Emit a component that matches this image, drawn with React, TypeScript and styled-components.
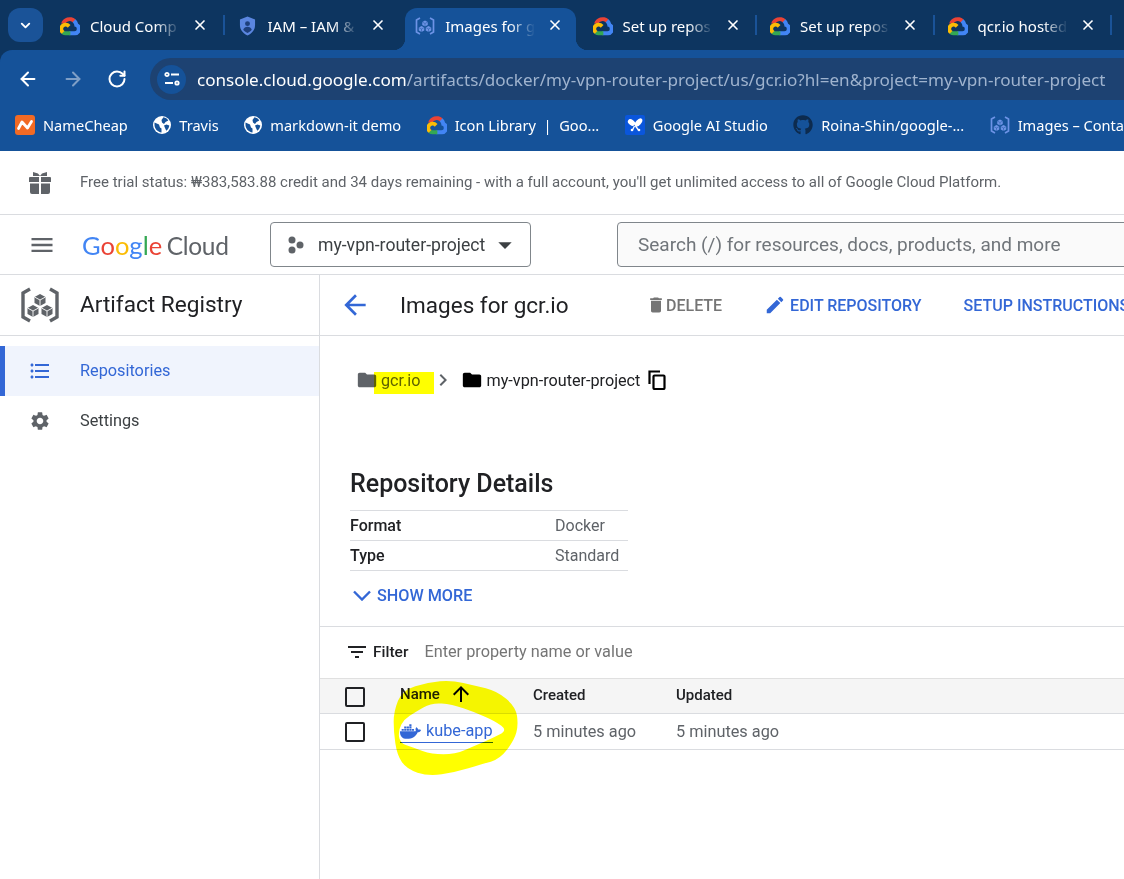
import React from "react";
import styled, { createGlobalStyle } from "styled-components";
import { MdArrowBack, MdDelete, MdEdit, MdFolder, MdChevronRight, MdSettings, MdFormatListBulleted, MdMenu, MdFilterList, MdArrowUpward, MdArrowDropDown } from "react-icons/md";
import { FaDocker, FaGithub } from "react-icons/fa";
import { ArrowLeft, ArrowRight, RotateCw, ChevronDown, X } from "lucide-react";

const Global = createGlobalStyle`
  html, body { margin: 0; padding: 0; background: #fff; }
  * { box-sizing: border-box; }
  svg { flex: none; display: block; }
`;
const CHROME_FONT = `"Noto Sans", "Open Sans", sans-serif`;
const UI_FONT = `Roboto, "Liberation Sans", sans-serif`;
const BLUE = "#3367d6";

const Page = styled.div`
  position: relative; width: 1124px; height: 879px; overflow: hidden; background: #0d3560;
  display: flex; flex-direction: column; font-family: ${UI_FONT}; color: #202124;
`;
const TabStrip = styled.div`
  height: 50px; flex: none; background: #0d3560; display: flex; align-items: flex-end; padding-left: 8px;
`;
const TabSearch = styled.div`
  width: 35px; height: 34px; margin: 0 4px 8px 0; border-radius: 12px; background: #1a5398;
  display: flex; align-items: center; justify-content: center; color: #fff;
`;
const Tab = styled.div<{ $active?: boolean; $sep?: boolean }>`
  position: relative; width: 177.5px; height: 42px; flex: none; display: flex; align-items: center;
  padding: 0 0 6px 13px; color: #fff; font: 15px ${CHROME_FONT};
  ${p => p.$active && `background: #155299; border-radius: 12px 12px 0 0; width: 171px; margin: 0 3.25px; padding: 0 0 6px 10px;
    &::before, &::after { content: ""; position: absolute; bottom: 0; width: 12px; height: 12px; }
    &::before { left: -12px; background: radial-gradient(circle at 0 0, transparent 12px, #155299 12.5px); }
    &::after { right: -12px; background: radial-gradient(circle at 100% 0, transparent 12px, #155299 12.5px); }
  `}
  ${p => p.$sep && `&::after { content: ""; position: absolute; right: 0; top: 7px; width: 2px; height: 20px; background: #1a5398; }`}
`;
const FavBox = styled.span`
  width: 20px; display: flex; justify-content: center; flex: none;
`;
const TabLabel = styled.span`
  margin-left: 10px; width: 90px; white-space: nowrap; overflow: visible; flex: none;
  -webkit-mask-image: linear-gradient(90deg, #000 72%, transparent 100%);
  mask-image: linear-gradient(90deg, #000 72%, transparent 100%);
`;
const TabClose = styled.span`
  display: flex; margin: -2px 0 0 12px; color: #fff;
`;
const Toolbar = styled.div`
  height: 58px; flex: none; background: #155299; border-radius: 12px 0 0 0; margin-top: 0;
  display: flex; align-items: center; padding-left: 17px; color: #fff; position: relative;
`;
const NavBtn = styled.span<{ $off?: boolean }>`
  width: 22px; display: flex; margin-right: 23px; color: ${p => (p.$off ? "#7f9fc6" : "#fff")};
`;
const Omnibox = styled.div`
  position: absolute; left: 150px; right: -40px; top: 8px; height: 42px; border-radius: 21px;
  background: #1d4272; display: flex; align-items: center; padding-left: 7px; white-space: nowrap;
`;
const Tune = styled.span`
  width: 29px; height: 29px; border-radius: 50%; background: #155299; display: flex; align-items: center; justify-content: center; flex: none;
`;
const Url = styled.span`
  margin-left: 11px; font: 17.1px ${CHROME_FONT}; color: #9fb3ce;
  b { font-weight: 400; color: #fff; }
`;
const Bookmarks = styled.div`
  height: 43px; flex: none; background: #155299; display: flex; align-items: center; padding: 0 0 10px 15px; gap: 25.5px; white-space: pre;
`;
const Bookmark = styled.div`
  display: flex; align-items: center; gap: 8px; color: #fff; font: 14.6px ${CHROME_FONT}; flex: none;
`;
const Console = styled.div`
  flex: 1; min-height: 0; background: #fff; display: flex; flex-direction: column;
`;
const Banner = styled.div`
  height: 64px; flex: none; border-bottom: 1px solid #dadce0; display: flex; align-items: center; padding-left: 28px;
  font-size: 15px; color: #5f6368;
`;
const BannerText = styled.span`margin-left: 28px; margin-top: -2px;`;
const Header = styled.div`
  height: 60px; flex: none; border-bottom: 1px solid #dadce0; display: flex; align-items: center; padding-left: 28px; color: #5f6368;
`;
const Logo = styled.div`
  margin-left: 26px; width: 188px; font: 25.5px Lato, ${UI_FONT}; color: #5f6368; white-space: nowrap; flex: none;
`;
const Letter = styled.span<{ $c: string }>`color: ${p => p.$c};`;
const LogoCloud = styled.span`margin-left: -2px; font-size: 24.5px; letter-spacing: -0.3px;`;
const Picker = styled.div`
  width: 261px; height: 45px; border: 1px solid #80868b; border-radius: 4px; display: flex; align-items: center; padding-left: 16px;
  font-size: 17.6px; color: #3c4043; flex: none;
`;
const PickerName = styled.span`margin-left: 13px; margin-right: 4px; white-space: nowrap;`;
const Search = styled.div`
  width: 560px; height: 45px; margin-left: 86px; border: 1px solid #80868b; border-radius: 4px; background: #fafafa;
  display: flex; align-items: center; padding-left: 20px; font-size: 19px; color: #70757a; flex: none; white-space: nowrap;
`;
const Body = styled.div`flex: 1; display: flex; min-height: 0;`;
const Sidebar = styled.div`width: 320px; flex: none; border-right: 1px solid #dadce0;`;
const SideTitle = styled.div`
  height: 61px; border-bottom: 1px solid #dadce0; display: flex; align-items: center; padding-left: 20px; font-size: 22.6px; color: #202124;
`;
const SideTitleText = styled.span`margin: -2px 0 0 20px;`;
const NavItem = styled.div<{ $active?: boolean }>`
  height: 50px; display: flex; align-items: center; font-size: 16.3px; padding-left: ${p => (p.$active ? "23px" : "29px")};
  ${p => p.$active ? `background: #f0f4fd; border-left: 5px solid ${BLUE}; color: ${BLUE}; margin-top: 10px;` : `color: #3c4043;`}
`;
const NavLabel = styled.span<{ $active?: boolean }>`margin: -2px 0 0 ${p => (p.$active ? "28px" : "29px")};`;
const Main = styled.div`flex: 1; min-width: 0; position: relative;`;
const TitleBar = styled.div`
  height: 61px; border-bottom: 1px solid #dadce0; display: flex; align-items: center; padding-left: 19px; white-space: nowrap;
`;
const PageTitle = styled.h1`
  margin: 0 0 0 29px; width: 246px; flex: none; font-size: 22.5px; font-weight: 400; color: #202124;
`;
const Action = styled.span<{ $off?: boolean }>`
  display: flex; align-items: center; font-size: 16px; font-weight: 500; flex: none;
  margin-right: 42px; color: ${p => (p.$off ? "#757575" : BLUE)};
`;
const Crumbs = styled.div`
  height: 88px; padding: 0 0 0 36px; position: relative; display: flex; align-items: center; font-size: 16.2px; color: #202124; white-space: nowrap;
`;
const CrumbName = styled.span<{ $gray?: boolean }>`
  margin-left: ${p => (p.$gray ? "3px" : "4px")}; color: ${p => (p.$gray ? "#5f6368" : "#202124")};
`;
const Chevron = styled.span`display: flex; margin: 0 6px 0 10px; color: #5f6368;`;
const CopyBtn = styled.span`display: flex; margin-left: 8px;`;
const Highlight = styled.span`
  position: absolute; left: 54px; top: 36px; width: 60px; height: 22px; background: #ffff00; mix-blend-mode: multiply;
`;
const Details = styled.section`padding: 46px 0 0 30px;`;
const DetailsTitle = styled.h2`
  margin: 0 0 12px; font-size: 25px; font-weight: 500; line-height: 28px; color: #202124;
`;
const DetailRows = styled.div`width: 278px; border-top: 1px solid #dadce0;`;
const DetailRow = styled.div`
  height: 30px; border-bottom: 1px solid #dadce0; display: grid; grid-template-columns: 205px 1fr; align-items: center; font-size: 16px;
  b { font-weight: 500; color: #202124; }
  span { color: #5f6368; }
`;
const ShowMore = styled.div`
  display: flex; align-items: center; height: 48px; padding-left: 3px; gap: 6px; color: ${BLUE}; font-size: 16.2px; font-weight: 500;
`;
const FilterBar = styled.div`
  height: 52px; margin-top: 7px; border-top: 1px solid #dadce0; display: flex; align-items: center; padding: 0 0 2px 25px; font-size: 15.5px;
`;
const FilterLabel = styled.span`margin-left: 4px; font-weight: 500; color: #202124;`;
const FilterHint = styled.span`margin-left: 16px; color: #757575; font-size: 16.3px;`;
const Row = styled.div<{ $head?: boolean }>`
  height: 36px; display: grid; grid-template-columns: 80px 133px 143px 1fr; align-items: center; border-bottom: 1px solid #dadce0;
  ${p => p.$head ? `background: #f5f5f5; border-top: 1px solid #e0e0e0; font-weight: 500; font-size: 15px; color:#202124;` : `font-size: 16.3px; color: #5f6368;`}
`;
const HeadText = styled.div`margin-top: -2px;`;
const CheckCell = styled.div<{ $head?: boolean }>`padding-left: 25px; display: flex; ${p => p.$head && `margin-top: 2px;`}`;
const Check = styled.span`
  width: 20px; height: 20px; border: 2px solid #202124; border-radius: 2px; display: block;
`;
const NameCell = styled.div`display: flex; align-items: center;`;
const HeadName = styled.span`margin: -4px 0 0; display: flex; align-items: center; gap: 9px;`;
const NameLink = styled.span`
  display: flex; align-items: center; gap: 5px; color: ${BLUE}; border-bottom: 1px solid ${BLUE}; line-height: 20px;
`;
const Scribble = styled.svg`
  position: absolute; left: 385px; top: 675px; width: 140px; height: 105px; mix-blend-mode: multiply; pointer-events: none;
`;

const Cloud = () => (
  <svg width="20" height="20" viewBox="0 0 24 24">
    <path fill="#EA4335" d="M15.2 7.4h.8l2.4-2.4.1-1A10.6 10.6 0 0 0 1.3 9.2c.3-.1.7-.2 1-.1l4.7-.8s.2-.4.4-.4a5.8 5.8 0 0 1 7.8-.5z" />
    <path fill="#4285F4" d="M21.8 9.2a10.7 10.7 0 0 0-3.2-5.2l-3.4 3.4a5.8 5.8 0 0 1 2.1 4.6v.6a2.9 2.9 0 1 1 0 5.8h-5.8l-.6.6v3.4l.6.6h5.8a7.5 7.5 0 0 0 4.5-13.8z" />
    <path fill="#34A853" d="M6.6 23h5.8v-4.6H6.6c-.4 0-.8-.1-1.2-.3l-.8.3-2.3 2.3-.2.8A7.5 7.5 0 0 0 6.6 23z" />
    <path fill="#FBBC05" d="M6.6 8A7.5 7.5 0 0 0 2.1 21.4l3.3-3.3a2.9 2.9 0 1 1 3.9-3.9l3.3-3.3A7.5 7.5 0 0 0 6.6 8z" />
  </svg>
);
const Shield = () => (
  <svg width="17" height="20" viewBox="0 0 18 20">
    <path fill="#5b86e0" d="M9 0l8 3v6c0 5-3.400 9.200-8 11C4.400 18.200 1 14 1 9V3z" />
    <circle cx="9" cy="7.500" r="2.600" fill="#1d3f7c" />
    <path fill="#1d3f7c" d="M4.500 14c.6-2.200 2.400-3.300 4.500-3.300s3.900 1.100 4.500 3.300C12.500 15.500 11 16.500 9 17.300 7 16.500 5.500 15.500 4.500 14z" />
  </svg>
);
const Registry = ({ c = "#6d93e6", size = 20, line = "#155299" }: { c?: string; size?: number; line?: string }) => (
  <svg width={size} height={size} viewBox="0 0 40 40">
    <path d="M10 4L3 8v24l7 4M30 4l7 4v24l-7 4" fill="none" stroke={c} strokeWidth="3.400" />
    <path fill={c} d="M20 9l5.500 3v6L20 21l-5.500-3v-6zM13 20l5.500 3v6L13 32l-5.500-3v-6zM27 20l5.500 3v6L27 32l-5.500-3v-6z" />
    <path fill="none" stroke={line} strokeWidth="0.900" d="M14.500 12l5.500 3 5.500-3M20 15v6M7.500 23l5.500 3 5.500-3M13 26v6M21.500 23l5.500 3 5.500-3M27 26v6" />
  </svg>
);
const Globe = () => (
  <svg width="18" height="18" viewBox="0 0 18 18">
    <circle cx="9" cy="9" r="9" fill="#fff" />
    <path fill="#155299" d="M1.500 6.500L6 8.500l1 3 1.500 1v4C4.500 16 1.500 12.500 1.500 9zM10.500 1.300c2 .4 3.700 1.500 4.800 3.200L12.500 6 11 8 9 6.500 8.500 4zM16.300 9.500c-.2 2.200-1.300 4-3 5.300L12 12l-1-2.500 2.500-1z" />
  </svg>
);
const NameCheap = () => (
  <svg width="20" height="20" viewBox="0 0 20 20">
    <rect width="20" height="20" rx="3" fill="#f26a24" />
    <path d="M3.500 13.500L7 7l5.500 6L16.500 6.500" fill="none" stroke="#fff" strokeWidth="2.800" strokeLinecap="round" strokeLinejoin="round" />
  </svg>
);
const AIStudio = () => (
  <svg width="20" height="20" viewBox="0 0 20 20">
    <rect width="20" height="20" rx="2" fill="#0a56dc" />
    <ellipse cx="6.500" cy="7.500" rx="4" ry="2.700" fill="#fff" transform="rotate(35 6.500 7.500)" />
    <ellipse cx="13.500" cy="7.500" rx="5" ry="2.600" fill="#fff" transform="rotate(-50 13.500 7.500)" />
    <path fill="none" stroke="#fff" strokeWidth="1.300" d="M9.500 11l-2 4M10.500 11l3 4" />
    <circle cx="7" cy="15" r="1.300" fill="#fff" /><circle cx="14" cy="15" r="1.300" fill="#fff" />
  </svg>
);
const Gift = () => (
  <svg width="24" height="24" viewBox="0 0 24 24">
    <path fill="#5f6368" d="M2 6h9v5H1V7a1 1 0 0 1 1-1zM13 6h9a1 1 0 0 1 1 1v4H13zM2 12.500h9V23H4a2 2 0 0 1-2-2zM13 12.500h9V21a2 2 0 0 1-2 2h-7zM5 1l5 1.500L12 5H5zM19 1l-5 1.500L12 5h7z" />
  </svg>
);
const ProjectDots = () => (
  <svg width="18" height="18" viewBox="0 0 18 18">
    <circle cx="5" cy="4" r="3.500" fill="#5f6368" /><circle cx="13" cy="9" r="3.500" fill="#5f6368" /><circle cx="5" cy="14" r="3.500" fill="#5f6368" />
  </svg>
);
const TuneIcon = () => (
  <svg width="18" height="16" viewBox="0 0 18 16" fill="none" stroke="#fff" strokeWidth="1.800">
    <circle cx="4" cy="3.500" r="1.700" /><path d="M8 3.500h8M2 12h8" /><circle cx="14" cy="12" r="1.700" />
  </svg>
);
const ExpandIcon = () => (
  <svg width="18" height="11" viewBox="0 0 18 11" fill="none" stroke={BLUE} strokeWidth="2.400">
    <path d="M1 1.500l8 8 8-8" />
  </svg>
);
const CopyIcon = () => (
  <svg width="18" height="20" viewBox="0 0 18 20" fill="none" stroke="#000" strokeWidth="2.200">
    <path d="M1.500 14V1.500H12" /><rect x="5.500" y="5.500" width="11" height="13.500" rx="1" />
  </svg>
);

const smooth = (pts: number[][]) => {
  const mid = (a: number[], b: number[]) => `${(a[0] + b[0]) / 2} ${(a[1] + b[1]) / 2}`;
  let d = `M${mid(pts[pts.length - 1], pts[0])}`;
  pts.forEach((p, i) => { d += `Q${p[0]} ${p[1]} ${mid(p, pts[(i + 1) % pts.length])}`; });
  return d + "Z";
};
const scribble =
  smooth([[26, 110], [52, 45], [130, 22], [200, 16], [270, 32], [335, 48], [392, 95], [400, 150], [388, 195], [345, 252], [290, 268], [210, 292], [130, 304], [65, 282], [36, 240], [26, 170]]) +
  smooth([[90, 112], [140, 83], [200, 88], [270, 112], [330, 138], [368, 166], [322, 190], [270, 212], [210, 238], [140, 238], [85, 218], [44, 204], [40, 165], [58, 132]]);

const tabs = [
  { icon: <Cloud />, label: "Cloud Comp", sep: true },
  { icon: <Shield />, label: "IAM – IAM &" },
  { icon: <Registry />, label: "Images for g", active: true },
  { icon: <Cloud />, label: "Set up repos", sep: true },
  { icon: <Cloud />, label: "Set up repos", sep: true },
  { icon: <Cloud />, label: "qcr.io hosted", sep: true },
];
const marks = [
  { icon: <NameCheap />, label: "NameCheap" },
  { icon: <Globe />, label: "Travis" },
  { icon: <Globe />, label: "markdown-it demo" },
  { icon: <Cloud />, label: "Icon Library  |  Goo..." },
  { icon: <AIStudio />, label: "Google AI Studio" },
  { icon: <FaGithub size={20} color="#0d2b4e" />, label: "Roina-Shin/google-..." },
  { icon: <Registry />, label: "Images – Conta" },
];

export default function App() {
  return (
    <Page>
      <Global />
      <TabStrip>
        <TabSearch><ChevronDown size={15} strokeWidth={3} /></TabSearch>
        {tabs.map((t, i) => (
          <Tab key={i} $active={t.active} $sep={t.sep}>
            <FavBox>{t.icon}</FavBox>
            <TabLabel>{t.label}</TabLabel>
            <TabClose><X size={16} strokeWidth={2.500} /></TabClose>
          </Tab>
        ))}
      </TabStrip>
      <Toolbar>
        <NavBtn><ArrowLeft size={22} strokeWidth={2.200} /></NavBtn>
        <NavBtn $off><ArrowRight size={22} strokeWidth={2.200} /></NavBtn>
        <NavBtn><RotateCw size={20} strokeWidth={2.400} /></NavBtn>
        <Omnibox>
          <Tune><TuneIcon /></Tune>
          <Url><b>console.cloud.google.com</b>/artifacts/docker/my-vpn-router-project/us/gcr.io?hl=en&amp;project=my-vpn-router-project</Url>
        </Omnibox>
      </Toolbar>
      <Bookmarks>
        {marks.map((m, i) => <Bookmark key={i}>{m.icon}<span>{m.label}</span></Bookmark>)}
      </Bookmarks>
      <Console>
        <Banner>
          <Gift />
          <BannerText>Free trial status: ₩383,583.88 credit and 34 days remaining - with a full account, you'll get unlimited access to all of Google Cloud Platform.</BannerText>
        </Banner>
        <Header>
          <MdMenu size={28} />
          <Logo>
            <Letter $c="#4285f4">G</Letter><Letter $c="#ea4335">o</Letter><Letter $c="#fbbc05">o</Letter><Letter $c="#4285f4">g</Letter><Letter $c="#34a853">l</Letter><Letter $c="#ea4335">e</Letter> <LogoCloud>Cloud</LogoCloud>
          </Logo>
          <Picker>
            <ProjectDots />
            <PickerName>my-vpn-router-project</PickerName>
            <MdArrowDropDown size={32} color="#3c4043" />
          </Picker>
          <Search>Search (/) for resources, docs, products, and more</Search>
        </Header>
        <Body>
          <Sidebar>
            <SideTitle><Registry c="#5f6368" size={40} line="#fff" /><SideTitleText>Artifact Registry</SideTitleText></SideTitle>
            <NavItem $active><MdFormatListBulleted size={24} /><NavLabel $active>Repositories</NavLabel></NavItem>
            <NavItem><MdSettings size={22} color="#5f6368" /><NavLabel>Settings</NavLabel></NavItem>
          </Sidebar>
          <Main>
            <TitleBar>
              <MdArrowBack size={32} color={BLUE} />
              <PageTitle>Images for gcr.io</PageTitle>
              <Action $off><MdDelete size={20} />DELETE</Action>
              <Action><MdEdit size={22} />&nbsp;EDIT REPOSITORY</Action>
              <Action>SETUP INSTRUCTIONS</Action>
            </TitleBar>
            <Crumbs>
              <MdFolder size={22} color="#5f6368" />
              <CrumbName $gray>gcr.io</CrumbName>
              <Chevron><MdChevronRight size={24} /></Chevron>
              <MdFolder size={22} color="#000" />
              <CrumbName>my-vpn-router-project</CrumbName>
              <CopyBtn><CopyIcon /></CopyBtn>
              <Highlight />
            </Crumbs>
            <Details>
              <DetailsTitle>Repository Details</DetailsTitle>
              <DetailRows>
                <DetailRow><b>Format</b><span>Docker</span></DetailRow>
                <DetailRow><b>Type</b><span>Standard</span></DetailRow>
              </DetailRows>
              <ShowMore><ExpandIcon />SHOW MORE</ShowMore>
            </Details>
            <FilterBar>
              <MdFilterList size={24} color="#202124" />
              <FilterLabel>Filter</FilterLabel>
              <FilterHint>Enter property name or value</FilterHint>
            </FilterBar>
            <Row $head>
              <CheckCell $head><Check /></CheckCell>
              <NameCell><HeadName>Name<MdArrowUpward size={24} color="#000" /></HeadName></NameCell>
              <HeadText>Created</HeadText>
              <HeadText>Updated</HeadText>
            </Row>
            <Row>
              <CheckCell><Check /></CheckCell>
              <NameCell><NameLink><FaDocker size={21} />kube-app</NameLink></NameCell>
              <div>5 minutes ago</div>
              <div>5 minutes ago</div>
            </Row>
          </Main>
        </Body>
      </Console>
      <Scribble viewBox="0 0 420 315">
        <path fillRule="evenodd" fill="#ffff00" d={scribble} />
      </Scribble>
    </Page>
  );
}
